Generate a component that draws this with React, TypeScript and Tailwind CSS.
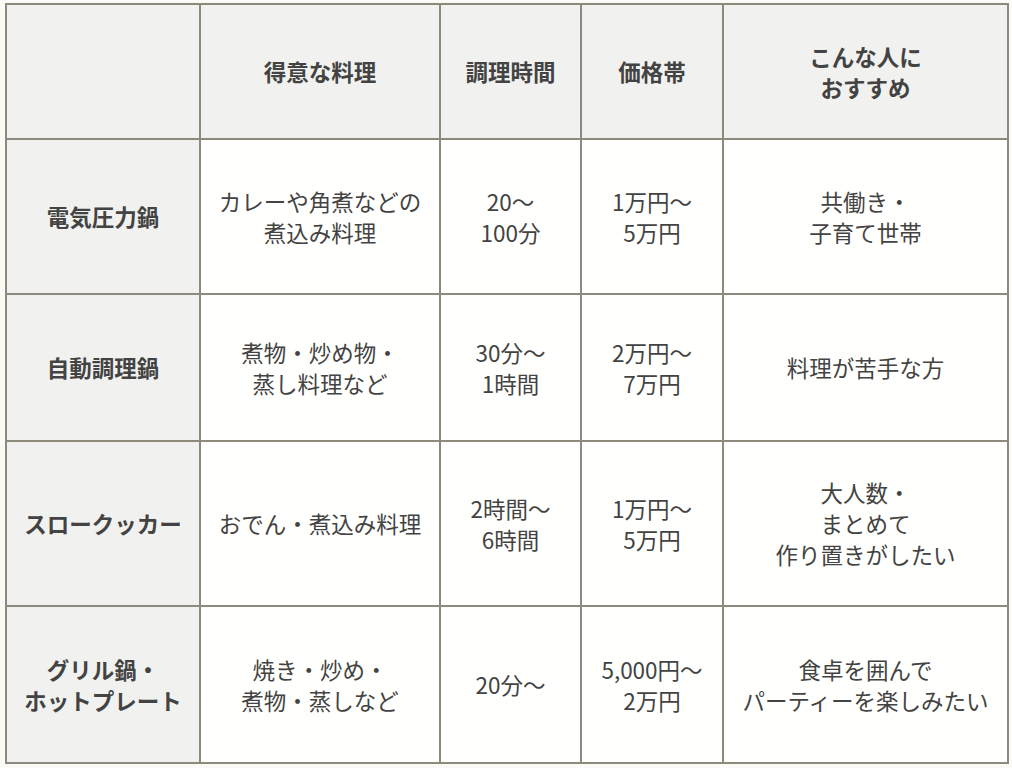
import React from 'react';

type Row = {
  name: string[];
  dish: string[];
  time: string[];
  price: string[];
  who: string[];
  h: string;
};

const rows: Row[] = [
  {
    name: ['電気圧力鍋'],
    dish: ['カレーや角煮などの', '煮込み料理'],
    time: ['20〜', '100分'],
    price: ['1万円〜', '5万円'],
    who: ['共働き・', '子育て世帯'],
    h: 'h-[155px]',
  },
  {
    name: ['自動調理鍋'],
    dish: ['煮物・炒め物・', '蒸し料理など'],
    time: ['30分〜', '1時間'],
    price: ['2万円〜', '7万円'],
    who: ['料理が苦手な方'],
    h: 'h-[147px]',
  },
  {
    name: ['スロークッカー'],
    dish: ['おでん・煮込み料理'],
    time: ['2時間〜', '6時間'],
    price: ['1万円〜', '5万円'],
    who: ['大人数・', 'まとめて', '作り置きがしたい'],
    h: 'h-[165px]',
  },
  {
    name: ['グリル鍋・', 'ホットプレート'],
    dish: ['焼き・炒め・', '煮物・蒸しなど'],
    time: ['20分〜'],
    price: ['5,000円〜', '2万円'],
    who: ['食卓を囲んで', 'パーティーを楽しみたい'],
    h: 'h-[157px]',
  },
];

function Lines({ lines }: { lines: string[] }) {
  return (
    <>
      {lines.map((l, i) => (
        <span key={i} className="block">
          {l}
        </span>
      ))}
    </>
  );
}

const cell = 'border-2 border-[#8e8a7b] text-center align-middle p-0';

export default function App() {
  return (
    <div
      className="min-h-screen w-full bg-[#fbfaf6] pt-[3px] pl-[5px] text-[#434343] text-[22.5px] leading-[31px]"
      style={{ fontFamily: '"Noto Sans CJK JP", "Noto Sans", sans-serif' }}
    >
      <table className="table-fixed border-collapse w-[1002px]">
        <colgroup>
          <col className="w-[194px]" />
          <col className="w-[240px]" />
          <col className="w-[141px]" />
          <col className="w-[142px]" />
          <col className="w-[285px]" />
        </colgroup>
        <thead>
          <tr className="h-[135px] bg-[#f1f2ef] font-bold">
            <th className={cell}></th>
            <th className={cell}>得意な料理</th>
            <th className={cell}>調理時間</th>
            <th className={cell}>価格帯</th>
            <th className={cell}>
              <Lines lines={['こんな人に', 'おすすめ']} />
            </th>
          </tr>
        </thead>
        <tbody>
          {rows.map((r, i) => (
            <tr key={i} className={r.h}>
              <th className={`${cell} bg-[#f1f2ef] font-bold`}>
                <Lines lines={r.name} />
              </th>
              <td className={`${cell} bg-[#fffffd]`}>
                <Lines lines={r.dish} />
              </td>
              <td className={`${cell} bg-[#fffffd]`}>
                <Lines lines={r.time} />
              </td>
              <td className={`${cell} bg-[#fffffd]`}>
                <Lines lines={r.price} />
              </td>
              <td className={`${cell} bg-[#fffffd]`}>
                <Lines lines={r.who} />
              </td>
            </tr>
          ))}
        </tbody>
      </table>
    </div>
  );
}
